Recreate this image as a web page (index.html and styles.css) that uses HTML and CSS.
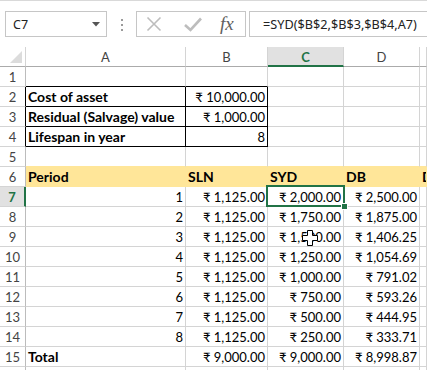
FILE: index.html
```html
<!DOCTYPE html>
<html lang="en">
<head>
    <title>SYD</title>
    <meta charset="UTF-8">
    <meta name="viewport" content="width=device-width, initial-scale=1.0">
    <link rel="stylesheet" href="styles.css">
</head>
<body>
    <div class="toolbar">
        <div class="namebox">
            <span>C7</span>
            <svg class="drop" width="8" height="5" viewBox="0 0 8 5"><path d="M0 0H8L4 4.5Z" fill="#555"/></svg>
        </div>
        <div class="grip"><i></i><i></i><i></i></div>
        <div class="fbtns">
            <svg class="ico-x" width="16" height="16" viewBox="0 0 16 16"><path d="M1.5 1.5L14.5 14.5M14.5 1.5L1.5 14.5" stroke="#bdbdbd" stroke-width="1.6" fill="none"/></svg>
            <svg class="ico-ok" width="18" height="15" viewBox="0 0 18 15"><path d="M1 8L6.5 13L17 1.5" stroke="#bdbdbd" stroke-width="2.6" fill="none"/></svg>
            <span class="fx">fx</span>
        </div>
        <div class="formula">=SYD($B$2,$B$3,$B$4,A7)</div>
    </div>

    <div class="sheet">
        <div class="ch corner"><svg width="12" height="12" viewBox="0 0 12 12"><path d="M12 0V12H0Z" fill="#dcdcdc"/></svg></div>
        <div class="ch">A</div>
        <div class="ch">B</div>
        <div class="ch ch-on">C</div>
        <div class="ch">D</div>
        <div class="ch"></div>

        <div class="rh">1</div>
        <div class="c bx-b"></div><div class="c bx-b"></div><div class="c"></div><div class="c"></div><div class="c"></div>

        <div class="rh bx-r">2</div>
        <div class="c b bx-r bx-b">Cost of asset</div><div class="c num bx-r bx-b">₹ 10,000.00</div><div class="c"></div><div class="c"></div><div class="c"></div>

        <div class="rh bx-r">3</div>
        <div class="c b bx-r bx-b">Residual (Salvage) value</div><div class="c num bx-r bx-b">₹ 1,000.00</div><div class="c"></div><div class="c"></div><div class="c"></div>

        <div class="rh bx-r">4</div>
        <div class="c b bx-r bx-b">Lifespan in year</div><div class="c num bx-r bx-b">8</div><div class="c"></div><div class="c"></div><div class="c"></div>

        <div class="rh">5</div>
        <div class="c yb"></div><div class="c yb"></div><div class="c yb"></div><div class="c yb"></div><div class="c yb"></div>

        <div class="rh">6</div>
        <div class="c b hl">Period</div><div class="c b hl">SLN</div><div class="c b hl">SYD</div><div class="c b hl">DB</div><div class="c b hl">DDB</div>

        <div class="rh rh-on">7</div>
        <div class="c num">1</div><div class="c num">₹ 1,125.00</div><div class="c num sel">₹ 2,000.00<span class="sel-box"></span><span class="sel-handle"></span></div><div class="c num">₹ 2,500.00</div><div class="c"></div>

        <div class="rh">8</div>
        <div class="c num">2</div><div class="c num">₹ 1,125.00</div><div class="c num">₹ 1,750.00</div><div class="c num">₹ 1,875.00</div><div class="c"></div>

        <div class="rh">9</div>
        <div class="c num">3</div><div class="c num">₹ 1,125.00</div><div class="c num cur">₹ 1,500.00<svg class="cursor" width="16" height="16" viewBox="0 0 16 16"><path d="M5.5 0.5H10.5V5.5H15.5V10.5H10.5V15.5H5.5V10.5H0.5V5.5H5.5Z" fill="#fff" stroke="#000" stroke-width="1"/></svg></div><div class="c num">₹ 1,406.25</div><div class="c"></div>

        <div class="rh">10</div>
        <div class="c num">4</div><div class="c num">₹ 1,125.00</div><div class="c num">₹ 1,250.00</div><div class="c num">₹ 1,054.69</div><div class="c"></div>

        <div class="rh">11</div>
        <div class="c num">5</div><div class="c num">₹ 1,125.00</div><div class="c num">₹ 1,000.00</div><div class="c num">₹ 791.02</div><div class="c"></div>

        <div class="rh">12</div>
        <div class="c num">6</div><div class="c num">₹ 1,125.00</div><div class="c num">₹ 750.00</div><div class="c num">₹ 593.26</div><div class="c"></div>

        <div class="rh">13</div>
        <div class="c num">7</div><div class="c num">₹ 1,125.00</div><div class="c num">₹ 500.00</div><div class="c num">₹ 444.95</div><div class="c"></div>

        <div class="rh">14</div>
        <div class="c num">8</div><div class="c num">₹ 1,125.00</div><div class="c num">₹ 250.00</div><div class="c num">₹ 333.71</div><div class="c"></div>

        <div class="rh">15</div>
        <div class="c b">Total</div><div class="c num">₹ 9,000.00</div><div class="c num">₹ 9,000.00</div><div class="c num">₹ 8,998.87</div><div class="c"></div>

        <div class="rh"></div>
        <div class="c"></div><div class="c"></div><div class="c"></div><div class="c"></div><div class="c"></div>
    </div>
</body>
</html>
```

FILE: styles.css
```css
body {
    margin: 0;
    width: 427px;
    height: 370px;
    overflow: hidden;
    background: #fff;
    font-family: Lato, "Noto Sans", sans-serif;
}

/* formula bar */
.toolbar {
    display: flex;
    align-items: flex-start;
    height: 47px;
    box-sizing: border-box;
    border-top: 1px solid #d9d9d9;
    padding: 10px 0 0 5px;
}

.namebox {
    width: 102px;
    height: 26px;
    box-sizing: border-box;
    border: 1px solid #c6c6c6;
    display: flex;
    align-items: center;
    justify-content: space-between;
    padding: 0 6px 0 7px;
    font-family: "Noto Sans", sans-serif;
    font-size: 12.5px;
    color: #222;
}

.grip {
    width: 29px;
    display: flex;
    flex-direction: column;
    align-items: center;
    gap: 3px;
    padding-top: 8px;
}

.grip i {
    width: 2px;
    height: 2px;
    background: #9a9a9a;
}

.fbtns {
    width: 110px;
    height: 26px;
    box-sizing: border-box;
    border: 1px solid #c6c6c6;
    display: flex;
    align-items: center;
    padding-left: 9px;
}

.ico-x {
    margin-right: 22px;
}

.ico-ok {
    margin-right: 18px;
}

.fx {
    font-family: "Liberation Serif", serif;
    font-style: italic;
    font-size: 19px;
    color: #606060;
    line-height: 24px;
}

.formula {
    flex: 1;
    height: 26px;
    box-sizing: border-box;
    border: 1px solid #c6c6c6;
    border-right: none;
    margin-left: 3px;
    padding-left: 13px;
    font-family: "Noto Sans", sans-serif;
    font-size: 12.7px;
    line-height: 24px;
    color: #222;
    white-space: nowrap;
}

/* grid */
.sheet {
    display: grid;
    grid-template-columns: 26px 160px 82px 76px 76px 7px;
    grid-auto-rows: 20px;
}

.sheet > div {
    box-sizing: border-box;
    border-right: 1px solid #d4d4d4;
    border-bottom: 1px solid #d4d4d4;
    font-size: 13px;
    line-height: 20px;
    white-space: nowrap;
    overflow: hidden;
}

.ch {
    text-align: center;
    color: #444;
    border-bottom-color: #ababab !important;
}

.corner {
    display: flex;
    align-items: flex-end;
    justify-content: flex-end;
    padding: 0 3px 3px 0;
}

.ch-on {
    background: #e1e1e1;
    color: #217346;
    font-weight: 700;
    border-bottom: 2px solid #217346 !important;
}

.rh {
    text-align: center;
    color: #444;
    border-right-color: #bcbcbc !important;
}

.rh-on {
    background: #e1e1e1;
    color: #217346;
    font-weight: 700;
    border-right: 2px solid #217346 !important;
}

.c {
    padding: 0 2px;
    color: #000;
}

.num {
    text-align: right;
}

.sheet > .b {
    font-weight: 700;
    font-size: 14px;
}

.hl {
    background: #ffe699;
    border-color: #ffe699 !important;
}

.yb {
    border-bottom-color: #ffe699 !important;
}

.bx-r {
    border-right-color: #000 !important;
}

.bx-b {
    border-bottom-color: #000 !important;
}

/* selection */
.sheet > .sel,
.sheet > .cur {
    position: relative;
    overflow: visible;
}

.sel-box {
    position: absolute;
    left: -2px;
    top: -2px;
    width: 79px;
    height: 22px;
    box-sizing: border-box;
    border: 2px solid #217346;
}

.sel-handle {
    position: absolute;
    left: 73px;
    top: 16px;
    width: 5px;
    height: 5px;
    background: #217346;
    border: 1px solid #fff;
}

.cursor {
    position: absolute;
    left: 34px;
    top: 3px;
}
```
